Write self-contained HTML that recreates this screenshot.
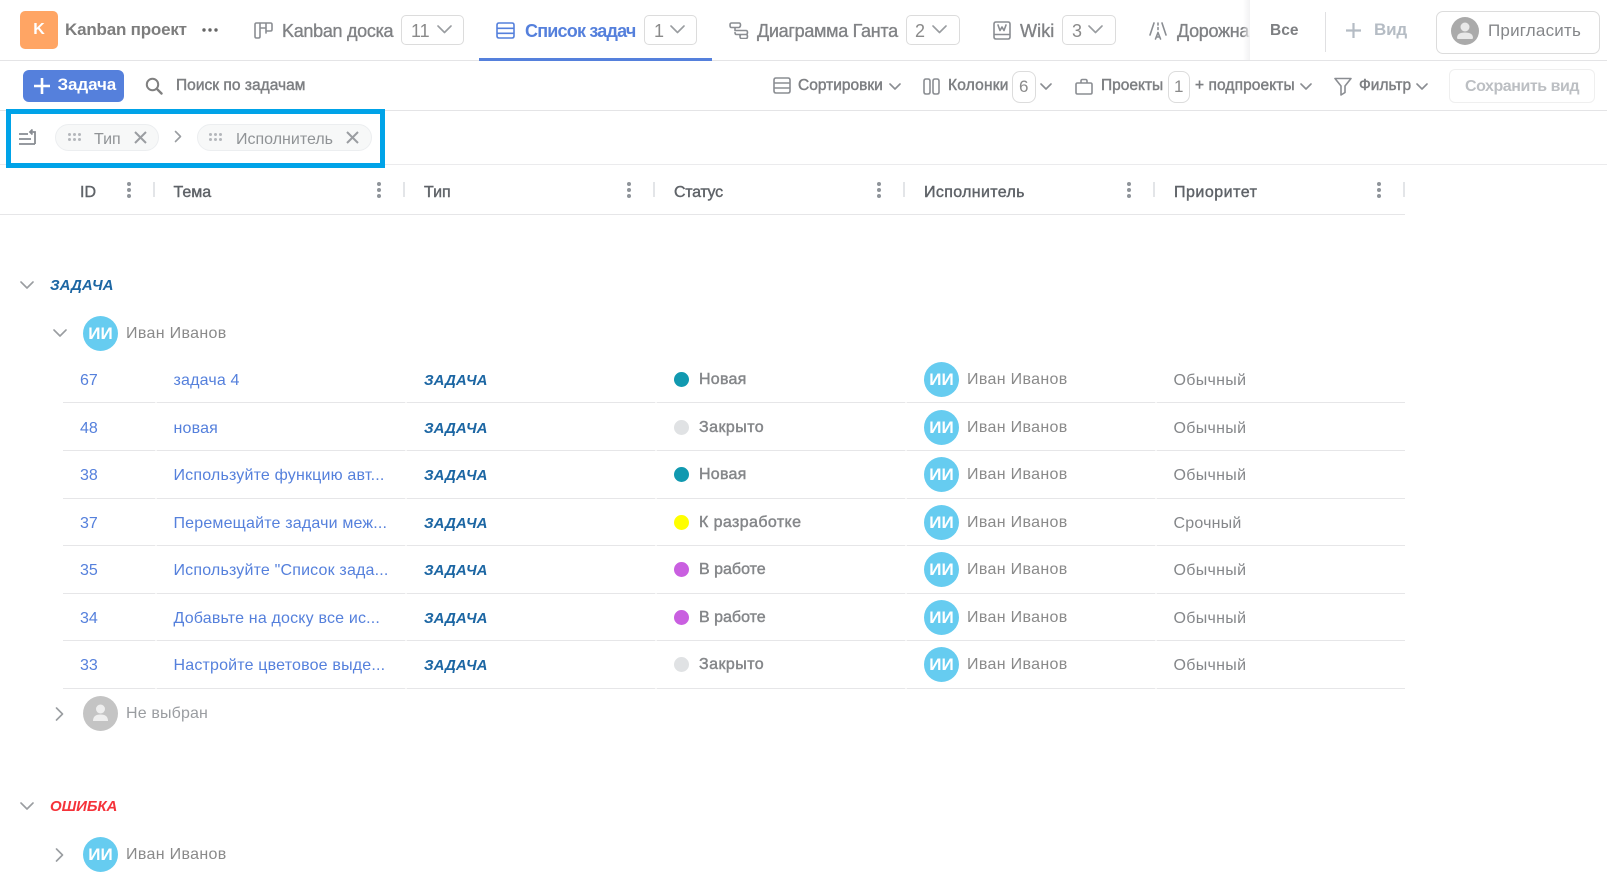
<!DOCTYPE html>
<html lang="ru"><head><meta charset="utf-8"><title>Список задач</title>
<style>
html,body{margin:0;padding:0;background:#fff}
body{width:1607px;height:884px;position:relative;overflow:hidden;font-family:"Liberation Sans",sans-serif;color:#808080}
.t{position:absolute;white-space:nowrap;line-height:20px;height:20px}
.abs,svg{position:absolute}
.box{position:absolute;border:1px solid #dcdcdc;border-radius:5px;box-sizing:border-box;background:#fff}
.tab{font-size:18px;color:#808285;-webkit-text-stroke:.35px;letter-spacing:-.3px}
.cnt{font-size:18px;color:#8a8a8a}
.tb{font-size:15.5px;color:#7d7f82;-webkit-text-stroke:.45px;letter-spacing:0}
.h{font-size:16px;color:#5f6368;top:183px;-webkit-text-stroke:.4px}
.s{position:absolute;width:2px;height:15px;background:#e3e5e8;top:182px}
.k{position:absolute;width:4px;height:4px;border-radius:50%;background:#8f949a;box-shadow:0 6px 0 #8f949a,0 12px 0 #8f949a;top:182px}
.row{position:absolute;left:0;width:1405px;height:48px}
.row .t{top:1px}
.id{left:80px;font-size:16px;color:#5580dc}
.sub{left:173.500px;font-size:16px;color:#5580dc;letter-spacing:.18px}
.ty{left:424px;font-size:15px;font-weight:bold;font-style:italic;color:#1c66a3}
.dot{position:absolute;left:674px;top:2px;width:15px;height:15px;border-radius:50%}
.row .st{left:699px;top:0;font-size:16px;color:#85878a;-webkit-text-stroke:.45px;letter-spacing:.25px}
.row .nm{left:967px;top:0;font-size:16px;color:#8a8a8a;letter-spacing:.33px}
.pr{left:1173.500px;font-size:16px;color:#85878a;letter-spacing:.3px}
.av{position:absolute;width:35px;height:35px;border-radius:50%;background:#66ccf0;color:#fff;font-size:17px;font-weight:bold;text-align:center;line-height:36px}
.row .av{left:924px;top:-8px}
.ln{position:absolute;left:63px;width:1342px;height:1px;background:linear-gradient(90deg,#e6e6e8 0 92px,#f6f6f6 92px 94px,#e6e6e8 94px 342px,#f6f6f6 342px 344px,#e6e6e8 344px 592px,#f6f6f6 592px 594px,#e6e6e8 594px 842px,#f6f6f6 842px 844px,#e6e6e8 844px 1092px,#f6f6f6 1092px 1094px,#e6e6e8 1094px 100%)}
.g{font-size:15px;font-weight:bold;font-style:italic;left:50px}
.an{left:126px;font-size:16px;color:#8a8a8a;letter-spacing:.33px}
.chip{position:absolute;top:124px;height:27px;box-sizing:border-box;border:1px solid #eceef0;border-radius:14px;background:#f7f8f8}
.c{fill:none;stroke:#9a9da1;stroke-width:1.6;stroke-linecap:round;stroke-linejoin:round}
.i{fill:none;stroke:#8a8d92;stroke-width:1.6;stroke-linecap:round;stroke-linejoin:round}
.gd{position:absolute;width:3px;height:3px;background:#b4b7bb;border-radius:50%;box-shadow:5px 0 0 #b4b7bb,10px 0 0 #b4b7bb,0 5px 0 #b4b7bb,5px 5px 0 #b4b7bb,10px 5px 0 #b4b7bb}
</style></head><body>

<!-- top bar -->
<div class="abs" style="left:0;top:60px;width:1607px;height:1px;background:#e4e4e6"></div>
<div class="abs" style="left:20px;top:11px;width:38px;height:38px;border-radius:5px;background:#ffa564;color:#fff;font-weight:bold;font-size:16px;text-align:center;line-height:38px">K</div>
<div class="t" style="left:65px;top:20px;font-size:17px;font-weight:bold;color:#7d7d7d;letter-spacing:-.2px">Kanban проект</div>
<svg style="left:202px;top:28px" width="16" height="4"><circle cx="2" cy="2" r="1.7" fill="#666"/><circle cx="8" cy="2" r="1.7" fill="#666"/><circle cx="14" cy="2" r="1.7" fill="#666"/></svg>

<svg style="left:254px;top:22px" width="19" height="17" viewBox="0 0 19 17"><path class="i" d="M6 1H2.500Q1 1 1 2.500V14.500Q1 16 2.500 16H4.500Q6 16 6 14.500V1H12V11M12 1H16.500Q18 1 18 2.500V7.500Q18 9 16.500 9H12M6 6H12"/></svg>
<div class="t tab" style="left:282px;top:21px">Kanban доска</div>
<div class="box" style="left:401px;top:15px;width:63px;height:30px"></div>
<div class="t cnt" style="left:411px;top:21px">11</div>
<svg style="left:437px;top:25px" width="15" height="9"><path class="c" d="M1 1L7.500 7.500L14 1"/></svg>

<div class="abs" style="left:479px;top:58px;width:233px;height:3px;background:#5580dc"></div>
<svg style="left:496px;top:22px" width="19" height="17" viewBox="0 0 19 17"><path class="i" style="stroke:#5580dc" d="M3 1H16Q18 1 18 3V14Q18 16 16 16H3Q1 16 1 14V3Q1 1 3 1ZM1 6.300H18M1 11.300H18"/></svg>
<div class="t" style="left:525px;top:21px;font-size:18px;color:#5580dc;font-weight:bold;letter-spacing:-.8px">Список задач</div>
<div class="box" style="left:644px;top:15px;width:53px;height:30px"></div>
<div class="t cnt" style="left:654px;top:21px">1</div>
<svg style="left:670px;top:25px" width="15" height="9"><path class="c" d="M1 1L7.500 7.500L14 1"/></svg>

<svg style="left:729px;top:22px" width="20" height="17" viewBox="0 0 20 17"><path class="i" d="M2.500 1H10Q11.500 1 11.500 3T10 5.500H2.500Q1 5.500 1 3.200T2.500 1ZM6 5.500V8.500H17Q18.500 8.500 18.500 10.500T17 12.500H7.500Q6 12.500 6 10.500M11 12.500V14M12.500 12.500H17Q18.500 12.500 18.500 14.500T17 16.500H12.500Q11 16.500 11 14.500T12.500 12.500Z"/></svg>
<div class="t tab" style="left:757px;top:21px;letter-spacing:-.3px">Диаграмма Ганта</div>
<div class="box" style="left:906px;top:15px;width:54px;height:30px"></div>
<div class="t cnt" style="left:915px;top:21px">2</div>
<svg style="left:932px;top:25px" width="15" height="9"><path class="c" d="M1 1L7.500 7.500L14 1"/></svg>

<svg style="left:993px;top:21px" width="18" height="19" viewBox="0 0 18 19"><path class="i" d="M3 1H15Q17 1 17 3V16Q17 18 15 18H3Q1 18 1 16V3Q1 1 3 1ZM1 13.500H17M5 4L7 9.500L9 6L11 9.500L13 4"/></svg>
<div class="t tab" style="left:1020px;top:21px;letter-spacing:.1px">Wiki</div>
<div class="box" style="left:1062px;top:15px;width:54px;height:30px"></div>
<div class="t cnt" style="left:1072px;top:21px">3</div>
<svg style="left:1088px;top:25px" width="15" height="9"><path class="c" d="M1 1L7.500 7.500L14 1"/></svg>

<svg style="left:1149px;top:22px" width="18" height="18" viewBox="0 0 18 18"><path class="i" d="M5 1L1 13M13 1L17 13M9 1V3M9 5.500V7.500M6.500 17L9 10.500L11.500 17M7.500 15H10.500"/></svg>
<div class="t tab" style="left:1177px;top:21px">Дорожная карта</div>

<div class="abs" style="left:1243px;top:0;width:7px;height:60px;background:linear-gradient(90deg,rgba(240,240,240,0),#f2f2f3)"></div>
<div class="abs" style="left:1250px;top:0;width:357px;height:60px;background:#fff"></div>
<div class="t" style="left:1270px;top:21px;font-size:15.5px;font-weight:bold;color:#7d7f82">Все</div>
<div class="abs" style="left:1325px;top:12px;width:1px;height:40px;background:#e0e0e2"></div>
<svg style="left:1346px;top:23px" width="15" height="15"><path d="M7.500 0V15M0 7.500H15" stroke="#b5bcc4" stroke-width="2.200"/></svg>
<div class="t" style="left:1374px;top:20px;font-size:17px;font-weight:bold;color:#b5bcc4;letter-spacing:-.2px">Вид</div>
<div class="box" style="left:1436px;top:11px;width:164px;height:43px;border-radius:7px"></div>
<svg style="left:1451px;top:17px" width="28" height="28" viewBox="0 0 28 28"><circle cx="14" cy="14" r="14" fill="#aaa"/><circle cx="14" cy="10" r="4.500" fill="#e8e8e8"/><path d="M6 21Q6 15.500 14 15.500T22 21Q22 22 20 22H8Q6 22 6 21Z" fill="#e8e8e8"/></svg>
<div class="t" style="left:1488px;top:21px;font-size:17px;color:#85878a;letter-spacing:.2px">Пригласить</div>

<!-- toolbar -->
<div class="abs" style="left:23px;top:70px;width:101px;height:32px;border-radius:6px;background:#5580dc"></div>
<svg style="left:34px;top:78px" width="16" height="16"><path d="M8 0V16M0 8H16" stroke="#fff" stroke-width="2.600"/></svg>
<div class="t" style="left:57.500px;top:75px;font-size:17px;font-weight:bold;color:#fff;letter-spacing:-.1px">Задача</div>
<svg style="left:145px;top:77px" width="18" height="18" viewBox="0 0 18 18"><circle cx="7.500" cy="7.500" r="5.700" fill="none" stroke="#808080" stroke-width="2"/><path d="M11.800 11.800L16.500 16.500" stroke="#808080" stroke-width="2.400" stroke-linecap="round"/></svg>
<div class="t tb" style="left:176px;top:76px;letter-spacing:.03px">Поиск по задачам</div>

<svg style="left:773px;top:77px" width="18" height="17" viewBox="0 0 18 17"><path class="i" d="M3 1H15Q17 1 17 3V14Q17 16 15 16H3Q1 16 1 14V3Q1 1 3 1ZM1 6H17M1 11H17"/></svg>
<div class="t tb" style="left:798px;top:76px">Сортировки</div>
<svg style="left:889px;top:83px" width="12" height="8"><path class="i" d="M1 1L6 6L11 1"/></svg>
<svg style="left:923px;top:78px" width="17" height="17" viewBox="0 0 17 17"><path class="i" d="M3 1H5Q7 1 7 3V14Q7 16 5 16H3Q1 16 1 14V3Q1 1 3 1ZM12 1H14Q16 1 16 3V14Q16 16 14 16H12Q10 16 10 14V3Q10 1 12 1Z"/></svg>
<div class="t tb" style="left:948px;top:76px;letter-spacing:.2px">Колонки</div>
<div class="box" style="left:1012px;top:71px;width:24px;height:32px;border-radius:8px"></div>
<div class="t" style="left:1019px;top:77px;font-size:17px;color:#8a8a8a">6</div>
<svg style="left:1040px;top:83px" width="12" height="8"><path class="i" d="M1 1L6 6L11 1"/></svg>
<svg style="left:1075px;top:78px" width="18" height="17" viewBox="0 0 18 17"><path class="i" d="M2.500 5H15.500Q17 5 17 6.500V14.500Q17 16 15.500 16H2.500Q1 16 1 14.500V6.500Q1 5 2.500 5ZM6 5V3Q6 1.500 7.500 1.500H10.500Q12 1.500 12 3V5"/></svg>
<div class="t tb" style="left:1101px;top:76px">Проекты</div>
<div class="box" style="left:1168px;top:71px;width:22px;height:32px;border-radius:8px"></div>
<div class="t" style="left:1174px;top:77px;font-size:17px;color:#8a8a8a">1</div>
<div class="t tb" style="left:1195px;top:76px;letter-spacing:.1px">+ подпроекты</div>
<svg style="left:1300px;top:83px" width="12" height="8"><path class="i" d="M1 1L6 6L11 1"/></svg>
<svg style="left:1334px;top:77px" width="18" height="19" viewBox="0 0 18 19"><path class="i" d="M1 1.500H17L11 9V15.500L7 18V9Z"/></svg>
<div class="t tb" style="left:1359px;top:76px">Фильтр</div>
<svg style="left:1416px;top:83px" width="12" height="8"><path class="i" d="M1 1L6 6L11 1"/></svg>
<div class="box" style="left:1449px;top:69px;width:146px;height:34px;border-color:#efefef;border-radius:6px"></div>
<div class="t" style="left:1465px;top:77px;font-size:16px;font-weight:bold;color:#bcbfc3;letter-spacing:-.45px">Сохранить вид</div>
<div class="abs" style="left:0;top:110px;width:1607px;height:1px;background:#e4e4e6"></div>

<!-- group bar -->
<div class="abs" style="left:0;top:164px;width:1607px;height:1px;background:#ebebed"></div>
<div class="abs" style="left:6px;top:109px;width:379px;height:59px;box-sizing:border-box;border:5px solid #00a3e8;background:#fff"></div>
<svg style="left:19px;top:129px" width="18" height="16" viewBox="0 0 18 16"><path fill="none" stroke="#888c92" stroke-width="1.800" d="M0 5H9M0 10H12M0 15H16M16 15V3H11M13.500 .5L11 3L13.500 5.500"/></svg>
<div class="chip" style="left:55px;width:104px"></div>
<div class="gd" style="left:68px;top:133px"></div>
<div class="t" style="left:94px;top:130px;font-size:16px;color:#909396">Тип</div>
<svg style="left:134px;top:131px" width="13" height="13"><path d="M1 1L12 12M12 1L1 12" stroke="#9a9da1" stroke-width="2"/></svg>
<svg style="left:174px;top:130px" width="8" height="13"><path class="c" d="M1.500 1.500L6.500 6.500L1.500 11.500"/></svg>
<div class="chip" style="left:197px;width:175px"></div>
<div class="gd" style="left:209px;top:133px"></div>
<div class="t" style="left:236px;top:130px;font-size:16px;color:#909396">Исполнитель</div>
<svg style="left:346px;top:131px" width="13" height="13"><path d="M1 1L12 12M12 1L1 12" stroke="#9a9da1" stroke-width="2"/></svg>

<!-- table header -->
<div class="t h" style="left:80px">ID</div><div class="k" style="left:127px"></div><div class="s" style="left:153px"></div>
<div class="t h" style="left:173.500px">Тема</div><div class="k" style="left:377px"></div><div class="s" style="left:403px"></div>
<div class="t h" style="left:424px">Тип</div><div class="k" style="left:627px"></div><div class="s" style="left:653px"></div>
<div class="t h" style="left:674px;letter-spacing:-.3px">Статус</div><div class="k" style="left:877px"></div><div class="s" style="left:903px"></div>
<div class="t h" style="left:924px;letter-spacing:.35px">Исполнитель</div><div class="k" style="left:1127px"></div><div class="s" style="left:1153px"></div>
<div class="t h" style="left:1174px;letter-spacing:.5px">Приоритет</div><div class="k" style="left:1377px"></div><div class="s" style="left:1403px"></div>
<div class="abs" style="left:0;top:214px;width:1405px;height:1px;background:#e6e6e8"></div>

<!-- group -->
<svg style="left:20px;top:281px" width="14" height="9"><path class="c" d="M1 1L7 7L13 1"/></svg>
<div class="t g" style="top:276px;color:#1c66a3">ЗАДАЧА</div>
<svg style="left:53px;top:329px" width="14" height="9"><path class="c" d="M1 1L7 7L13 1"/></svg>
<div class="av" style="left:83px;top:316px">ИИ</div>
<div class="t an" style="top:324px">Иван Иванов</div>

<div class="row" style="top:370px"><div class="t id">67</div><div class="t sub">задача 4</div><div class="t ty">ЗАДАЧА</div><i class="dot" style="background:#1199b0"></i><div class="t st">Новая</div><div class="av">ИИ</div><div class="t nm">Иван Иванов</div><div class="t pr">Обычный</div></div>
<div class="ln" style="top:402px"></div>
<div class="row" style="top:418px"><div class="t id">48</div><div class="t sub">новая</div><div class="t ty">ЗАДАЧА</div><i class="dot" style="background:#e0e2e4"></i><div class="t st" style="letter-spacing:.45px">Закрыто</div><div class="av">ИИ</div><div class="t nm">Иван Иванов</div><div class="t pr">Обычный</div></div>
<div class="ln" style="top:450px"></div>
<div class="row" style="top:465px"><div class="t id">38</div><div class="t sub">Используйте функцию авт...</div><div class="t ty">ЗАДАЧА</div><i class="dot" style="background:#1199b0"></i><div class="t st">Новая</div><div class="av">ИИ</div><div class="t nm">Иван Иванов</div><div class="t pr">Обычный</div></div>
<div class="ln" style="top:498px"></div>
<div class="row" style="top:513px"><div class="t id">37</div><div class="t sub">Перемещайте задачи меж...</div><div class="t ty">ЗАДАЧА</div><i class="dot" style="background:#ffff00"></i><div class="t st" style="letter-spacing:.4px">К разработке</div><div class="av">ИИ</div><div class="t nm">Иван Иванов</div><div class="t pr" style="letter-spacing:.2px">Срочный</div></div>
<div class="ln" style="top:545px"></div>
<div class="row" style="top:560px"><div class="t id">35</div><div class="t sub">Используйте "Список зада...</div><div class="t ty">ЗАДАЧА</div><i class="dot" style="background:#c95fe0"></i><div class="t st" style="letter-spacing:0">В работе</div><div class="av">ИИ</div><div class="t nm">Иван Иванов</div><div class="t pr">Обычный</div></div>
<div class="ln" style="top:593px"></div>
<div class="row" style="top:608px"><div class="t id">34</div><div class="t sub">Добавьте на доску все ис...</div><div class="t ty">ЗАДАЧА</div><i class="dot" style="background:#c95fe0"></i><div class="t st" style="letter-spacing:0">В работе</div><div class="av">ИИ</div><div class="t nm">Иван Иванов</div><div class="t pr">Обычный</div></div>
<div class="ln" style="top:640px"></div>
<div class="row" style="top:655px"><div class="t id">33</div><div class="t sub">Настройте цветовое выде...</div><div class="t ty">ЗАДАЧА</div><i class="dot" style="background:#e0e2e4"></i><div class="t st" style="letter-spacing:.45px">Закрыто</div><div class="av">ИИ</div><div class="t nm">Иван Иванов</div><div class="t pr">Обычный</div></div>
<div class="ln" style="top:688px"></div>

<svg style="left:55px;top:707px" width="9" height="14"><path class="c" d="M1.500 1L7.500 7L1.500 13"/></svg>
<svg style="left:83px;top:696px" width="35" height="35" viewBox="0 0 35 35"><circle cx="17.500" cy="17.500" r="17.500" fill="#c4c4c4"/><circle cx="17.500" cy="13" r="4.500" fill="#eee"/><path d="M10 25Q10 18.500 17.500 18.500T25 25Z" fill="#eee"/></svg>
<div class="t an" style="top:704px;color:#9a9da1;letter-spacing:.15px">Не выбран</div>

<svg style="left:20px;top:802px" width="14" height="9"><path class="c" d="M1 1L7 7L13 1"/></svg>
<div class="t g" style="top:797px;color:#f5333a;letter-spacing:-.1px">ОШИБКА</div>
<svg style="left:55px;top:848px" width="9" height="14"><path class="c" d="M1.500 1L7.500 7L1.500 13"/></svg>
<div class="av" style="left:83px;top:837px">ИИ</div>
<div class="t an" style="top:845px">Иван Иванов</div>
</body></html>
